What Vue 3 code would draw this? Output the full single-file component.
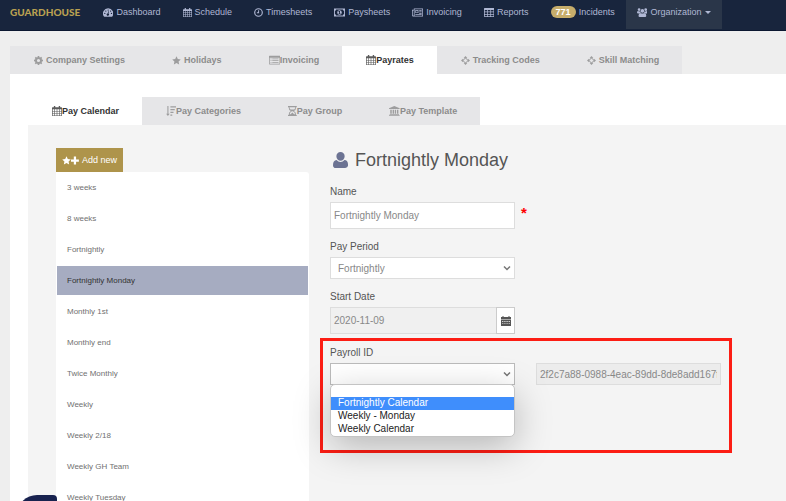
<template>
  <div class="page">
    <header class="navbar">
      <a href="#" class="brand">GUARDHOUSE</a>
      <nav class="nav">
        <a
          v-for="item in navItems"
          :key="item.label"
          href="#"
          :class="['nav-item', { open: item.menu }]"
        >
          <span v-if="item.badge" class="badge">{{ item.badge }}</span>
          <svg v-else class="icon" :viewBox="icons[item.icon].box" aria-hidden="true">
            <path :d="icons[item.icon].d" />
          </svg>
          <span>{{ item.label }}</span>
          <span v-if="item.menu" class="caret"></span>
        </a>
      </nav>
    </header>

    <main class="content">
      <nav class="tabs">
        <a
          v-for="tab in tabs"
          :key="tab.label"
          href="#"
          :class="['tab', { active: tab.label === activeTab, spaced: tab.spaced }]"
          @click.prevent="activeTab = tab.label"
        >
          <svg class="icon" :viewBox="icons[tab.icon].box" aria-hidden="true">
            <path :d="icons[tab.icon].d" />
          </svg>
          <span>{{ tab.label }}</span>
        </a>
      </nav>

      <div class="card">
        <nav class="tabs">
          <a
            v-for="tab in subTabs"
            :key="tab.label"
            href="#"
            :class="['tab', { active: tab.label === activeSubTab }]"
            @click.prevent="activeSubTab = tab.label"
          >
            <svg class="icon" :viewBox="icons[tab.icon].box" aria-hidden="true">
              <path :d="icons[tab.icon].d" />
            </svg>
            <span>{{ tab.label }}</span>
          </a>
        </nav>

        <div class="panel">
          <aside class="sidebar">
            <button type="button" class="btn-add">
              <svg class="icon" :viewBox="icons.star.box" aria-hidden="true">
                <path :d="icons.star.d" />
              </svg>
              <svg class="icon" :viewBox="icons.plus.box" aria-hidden="true">
                <path :d="icons.plus.d" />
              </svg>
              <span>Add new</span>
            </button>
            <ul class="calendar-list">
              <li v-for="name in calendars" :key="name">
                <a
                  href="#"
                  :class="{ selected: name === form.name }"
                  @click.prevent="form.name = name"
                >{{ name }}</a>
              </li>
            </ul>
          </aside>

          <form class="form" @submit.prevent>
            <h1>
              <svg :viewBox="icons.user.box" aria-hidden="true">
                <path :d="icons.user.d" />
              </svg>
              <span>{{ form.name }}</span>
            </h1>

            <div class="field">
              <label for="name">Name</label>
              <div class="row">
                <input id="name" v-model="form.name" type="text" class="control tall" />
                <span class="required">*</span>
              </div>
            </div>

            <div class="field">
              <label for="period">Pay Period</label>
              <div class="row">
                <div class="select-wrap">
                  <select id="period" v-model="form.period" class="control">
                    <option>Weekly</option>
                    <option>Fortnightly</option>
                    <option>Monthly</option>
                  </select>
                  <svg class="chevron" viewBox="0 0 8 6" aria-hidden="true">
                    <path d="M1 1.5L4 4.5L7 1.5" />
                  </svg>
                </div>
              </div>
            </div>

            <div class="field">
              <label for="start">Start Date</label>
              <div class="row">
                <div class="date-group">
                  <input id="start" v-model="form.start" type="text" class="control tall" readonly />
                  <button type="button" class="btn-date" aria-label="Choose date">
                    <svg :viewBox="icons.date.box" aria-hidden="true">
                      <path :d="icons.date.d" />
                    </svg>
                  </button>
                </div>
              </div>
            </div>

            <div class="field highlight">
              <label for="payroll">Payroll ID</label>
              <div class="row">
                <div class="select-wrap">
                  <select id="payroll" v-model="form.payroll" class="control payroll">
                    <option v-for="option in payrollOptions" :key="option">{{ option }}</option>
                  </select>
                  <svg class="chevron" viewBox="0 0 8 6" aria-hidden="true">
                    <path d="M1 1.5L4 4.5L7 1.5" />
                  </svg>
                  <ul class="dropdown" role="listbox" aria-label="Payroll ID">
                    <li
                      v-for="option in payrollOptions"
                      :key="option"
                      role="option"
                      :aria-selected="option === hovered"
                      :class="{ hovered: option === hovered }"
                      @mouseenter="hovered = option"
                      @click="form.payroll = option"
                    >{{ option }}</li>
                  </ul>
                </div>
                <input
                  type="text"
                  class="control payroll-key"
                  aria-label="Payroll key"
                  value="2f2c7a88-0988-4eac-89dd-8de8add167f6"
                  readonly
                />
              </div>
            </div>
          </form>
        </div>
      </div>
    </main>

    <button type="button" class="chat" aria-label="Help"></button>
  </div>
</template>

<script setup>
import { reactive, ref } from 'vue'

// repeats one rectangle over a set of columns and rows
function cells(xs, ys, w, h) {
  return ys.map(y => xs.map(x => `M${x} ${y}v${h}h${w}v${-h}z`).join('')).join('')
}

function dot(x, y, r) {
  return `M${x - r} ${y}a${r} ${r} 0 1 0 ${2 * r} 0a${r} ${r} 0 1 0 ${-2 * r} 0z`
}

const icons = {
  dashboard: {
    box: '0 0 16 14',
    d: 'M8 .5A8 8 0 0 0 1.2 12.8q.3.7.9.7h11.8q.6 0 .9-.7A8 8 0 0 0 8 .5z' +
      dot(2.8, 8.5, 1) + dot(4.4, 4.8, 1) + dot(8, 3.2, 1) + dot(11.8, 4.8, 1) + dot(13.2, 8.5, 1) +
      'M9.2 5.2L8.5 8.7a1.8 1.8 0 1 1-1.2-.3L8.2 5z'
  },
  calendar: {
    box: '0 0 16 16',
    d: 'M3 0h2.2v2h5.6V0H13v2h2q1 0 1 1v12q0 1-1 1H1q-1 0-1-1V3q0-1 1-1h2z' +
      cells([1.1, 4.8, 8.5, 12.2], [5.2, 8.8, 12.4], 2.7, 2.6)
  },
  clock: {
    box: '0 0 14 14',
    d: dot(7, 7, 6.8) + dot(7, 7, 5) + 'M6.4 3.5h1.5v4.5H4.5V6.6h1.9z'
  },
  money: {
    box: '0 0 18 13',
    d: 'M0 0h18v13H0zM3.5 1.5A2 2 0 0 1 1.5 3.5v6A2 2 0 0 1 3.5 11.5h11A2 2 0 0 1 16.5 9.5v-6A2 2 0 0 1 14.5 1.5z' +
      dot(9, 6.5, 3.8) + 'M8.4 4h1.4v4h1v1H7.4V8h1V5.5h-1v-.9z'
  },
  newspaper: {
    box: '0 0 18 13',
    d: 'M3 0h15v13H2q-2 0-2-2V2h3zM1.2 3.2v8q.9 1.2 1.8 0v-8zM4.2 1.2v10.6h12.6V1.2z' +
      'M5.5 2.5h5v5h-5zM6.7 3.7v2.6h2.6V3.7zM11.8 2.5h4v1.2h-4zM11.8 4.9h4v1.2h-4zM11.8 7.3h4v1.2h-4zM5.5 9.5h10.3v1.2H5.5z'
  },
  table: {
    box: '0 0 16 14',
    d: 'M1 0h14q1 0 1 1v12q0 1-1 1H1q-1 0-1-1V1q0-1 1-1z' +
      cells([1.2, 6.1, 11], [3.2, 6.8, 10.4], 3.8, 2.4)
  },
  users: {
    box: '0 0 18 15',
    d: dot(3.5, 2.6, 2.3) + dot(14.5, 2.6, 2.3) + dot(9, 4.8, 3) +
      'M1.5 5.2q2.2 1.2 4 .3q0 2 1 3.2Q4.5 8 3.4 9.2H2Q0 9.2 0 8q0-2.5 1.5-2.8z' +
      'M16.5 5.2q-2.2 1.2-4 .3q0 2-1 3.2q2-.7 3.1.5H16q2 0 2-1.2q0-2.5-1.5-2.8z' +
      'M6.2 8.2q2.8 1.8 5.6 0q3.7.3 3.7 4.8Q15.5 15 13.5 15h-9q-2 0-2-2q0-4.5 3.7-4.8z'
  },
  gear: {
    box: '0 0 16 16',
    d: 'M6.7 0h2.6l.4 2 1.3.6 1.7-1.1 1.9 1.9-1.1 1.7.6 1.3 1.9.3v2.6l-1.9.4-.6 1.3 1.1 1.7-1.9 1.9-1.7-1.1-1.3.6-.4 1.9H6.7l-.4-1.9-1.3-.6-1.7 1.1-1.9-1.9L2.5 11l-.6-1.3L0 9.3V6.7l1.9-.3.6-1.3-1.1-1.7 1.9-1.9L5 2.6 6.3 2z' +
      dot(8, 8, 2.8)
  },
  star: {
    box: '0 0 16 16',
    d: 'M8 .5l2.3 4.9 5.3.7-3.9 3.7 1 5.3L8 12.5l-4.7 2.6 1-5.3L.4 6.1l5.3-.7z'
  },
  plus: {
    box: '0 0 14 16',
    d: 'M5 1h4v5h5v4H9v5H5v-5H0V6h5z'
  },
  list: {
    box: '0 0 18 16',
    d: 'M1 1h16q1 0 1 1v12q0 1-1 1H1q-1 0-1-1V2q0-1 1-1zM1.2 4.2v9.6h15.6V4.2z' +
      cells([2.5], [5.5, 8.3, 11.1], 1.5, 1.4) + cells([5.2], [5.5, 8.3, 11.1], 10, 1.4)
  },
  crosshair: {
    box: '0 0 16 16',
    d: 'M8 0l3.2 3.6H9.3l3.1 3.1V4.8L16 8l-3.6 3.2V9.3l-3.1 3.1h1.9L8 16l-3.2-3.6h1.9L3.6 9.3v1.9L0 8l3.6-3.2v1.9l3.1-3.1H4.8z' +
      'M8 4.3L4.3 8L8 11.7L11.7 8z'
  },
  sort: {
    box: '0 0 16 16',
    d: 'M2.2 0h1.7v12.5h2L3 16 .2 12.5h2zM7 .5h9v1.9H7zM7 4.9h7v1.9H7zM7 9.3h5v1.9H7zM7 13.7h3v1.9H7z'
  },
  hourglass: {
    box: '0 0 14 16',
    d: 'M0 0h14v1.8h-1q0 4.2-3.6 6.2Q13 10 13 14.2h1V16H0v-1.8h1Q1 10 4.6 8Q1 6 1 1.8H0zM2.3 1.8Q2.5 4 4 5.5h6q1.5-1.5 1.7-3.7zM6.3 8.5Q3.5 9.8 2.5 13h1.8L7 10.5 9.7 13h1.8Q10.5 9.8 7.7 8.5z'
  },
  bank: {
    box: '0 0 17 16',
    d: 'M8.5 0L17 3.5v1.3H0V3.5zM2 5.8h2.4v6.5H2zM5.8 5.8h2.2v6.5H5.8zM9.2 5.8h2.2v6.5H9.2zM12.8 5.8H15v6.5h-2.2zM1 12.8h15v1.1H1zM0 14.6h17V16H0z'
  },
  user: {
    box: '0 0 16 17',
    d: 'M8 0a4.4 4.4 0 0 1 4.4 4.5A4.4 4.8 0 0 1 8 9.3a4.4 4.8 0 0 1-4.4-4.8A4.4 4.4 0 0 1 8 0zM3.8 8.5Q5.5 10.5 8 10.5t4.2-2Q16 8.7 16 14q0 3-3 3H3q-3 0-3-3 0-5.3 3.8-5.5z'
  },
  date: {
    box: '0 0 10 10',
    d: 'M0 1h1.5V0h1v1h5V0h1v1H10v2H0zM0 3.5h10V10H0z' + cells([1, 3.2, 5.4, 7.6], [5.2, 7.4], 1.4, 0.7)
  }
}

const navItems = [
  { label: 'Dashboard', icon: 'dashboard' },
  { label: 'Schedule', icon: 'calendar' },
  { label: 'Timesheets', icon: 'clock' },
  { label: 'Paysheets', icon: 'money' },
  { label: 'Invoicing', icon: 'newspaper' },
  { label: 'Reports', icon: 'table' },
  { label: 'Incidents', badge: 771 },
  { label: 'Organization', icon: 'users', menu: true }
]

const tabs = [
  { label: 'Company Settings', icon: 'gear', spaced: true },
  { label: 'Holidays', icon: 'star', spaced: true },
  { label: 'Invoicing', icon: 'list' },
  { label: 'Payrates', icon: 'calendar' },
  { label: 'Tracking Codes', icon: 'crosshair', spaced: true },
  { label: 'Skill Matching', icon: 'crosshair', spaced: true }
]

const subTabs = [
  { label: 'Pay Calendar', icon: 'calendar' },
  { label: 'Pay Categories', icon: 'sort' },
  { label: 'Pay Group', icon: 'hourglass' },
  { label: 'Pay Template', icon: 'bank' }
]

const calendars = [
  '3 weeks',
  '8 weeks',
  'Fortnightly',
  'Fortnightly Monday',
  'Monthly 1st',
  'Monthly end',
  'Twice Monthly',
  'Weekly',
  'Weekly 2/18',
  'Weekly GH Team',
  'Weekly Tuesday'
]

const payrollOptions = ['', 'Fortnightly Calendar', 'Weekly - Monday', 'Weekly Calendar']

const activeTab = ref('Payrates')
const activeSubTab = ref('Pay Calendar')
const hovered = ref('Fortnightly Calendar')

const form = reactive({
  name: 'Fortnightly Monday',
  period: 'Fortnightly',
  start: '2020-11-09',
  payroll: ''
})
</script>

<style>
body {
  margin: 0;
  background: #eee;
}
</style>

<style scoped>
.page {
  position: relative;
  height: 100vh;
  overflow: hidden;
  display: flex;
  flex-direction: column;
  background: #eee;
  color: #555;
  font-family: "Liberation Sans", Arial, sans-serif;
  font-size: 10px;
}

.page * {
  box-sizing: border-box;
}

a {
  color: inherit;
  text-decoration: none;
}

button,
input,
select {
  font: inherit;
  color: inherit;
}

svg {
  display: block;
  flex: none;
  fill: currentColor;
  fill-rule: evenodd;
}

.icon {
  height: 9px;
}

.navbar {
  display: flex;
  flex: none;
  height: 31px;
  background: #18253d;
  border-bottom: 1px solid #0b1730;
  color: #b0b8d4;
  font-size: 9px;
}

.brand {
  padding: 0 12px 0 10px;
  line-height: 25px;
  color: #b9a051;
  font-family: Lato, sans-serif;
  font-size: 10px;
  font-weight: 900;
}

.nav {
  display: flex;
}

.nav-item {
  display: flex;
  align-items: center;
  gap: 3px;
  height: 29px;
  padding: 0 11px 5px;
  white-space: nowrap;
}

.nav-item .icon {
  max-width: 11px;
}

.nav-item.open {
  background: #2a3649;
}

.badge {
  padding: 0 5px;
  border-radius: 6px;
  background: #c6ad6b;
  color: #fff;
  font-weight: bold;
  line-height: 12px;
}

.caret {
  margin-left: 1px;
  border: 3px solid transparent;
  border-top-color: currentColor;
  border-bottom: 0;
}

.content {
  display: flex;
  flex: 1;
  flex-direction: column;
  padding: 15px 0 0 10px;
}

.tabs {
  display: flex;
  align-self: flex-start;
  background: #e6e6e8;
  color: #8c8c8c;
  font-size: 9px;
  font-weight: bold;
}

.tab {
  display: flex;
  align-items: center;
  height: 28px;
  padding: 0 23px 0 24px;
  white-space: nowrap;
}

.tab .icon {
  height: 10px;
  opacity: 0.8;
}

.tab.spaced .icon {
  height: 9px;
  margin-right: 3px;
}

.tab.active {
  background: #fff;
  color: #333;
}

.card {
  display: flex;
  flex: 1;
  flex-direction: column;
  padding: 23px 0 0 18px;
  background: #fff;
}

.panel {
  display: grid;
  flex: 1;
  grid-template-columns: 253fr 391fr;
  gap: 21px;
  padding: 23px 65px 0 28px;
  background: #f4f4f4;
}

.btn-add {
  display: flex;
  align-items: center;
  height: 24px;
  padding: 0 6px;
  border: 0;
  background: #ae944b;
  color: #fff;
  font-size: 9px;
}

.btn-add span {
  margin-left: 3px;
}

.calendar-list {
  margin: 0;
  padding: 0;
  list-style: none;
  border-radius: 0 3px 0 0;
  background: #fff;
  color: #707070;
  font-size: 8px;
}

.calendar-list a {
  display: block;
  padding: 0 10px;
  border: 1px solid transparent;
  line-height: 29px;
}

.calendar-list a.selected {
  border-color: #fff;
  background: #a6acc1;
  color: #333;
}

h1 {
  display: flex;
  align-items: center;
  gap: 7px;
  margin: 0 0 14px;
  padding-left: 3px;
  color: #555;
  font-size: 18px;
  font-weight: normal;
  line-height: 24px;
}

h1 svg {
  height: 16px;
  color: #6c7393;
}

.field {
  margin-bottom: 12px;
}

.field label {
  display: block;
  margin-bottom: 4px;
  line-height: 12px;
}

.row {
  display: grid;
  grid-template-columns: minmax(0, 1fr) minmax(0, 1fr);
  gap: 21px;
}

.control {
  display: block;
  width: 100%;
  height: 22px;
  padding: 0 3px;
  border: 1px solid #ddd;
  border-radius: 0;
  outline: 0;
  background: #fff;
  color: #888;
}

.control.tall {
  height: 27px;
}

.control[readonly] {
  background: #f0f0f0;
}

.required {
  margin-left: -15px;
  color: #f00;
  font-size: 15px;
  font-weight: bold;
  line-height: 22px;
}

.select-wrap {
  position: relative;
}

select.control {
  appearance: none;
  padding: 0 20px 0 7px;
}

.chevron {
  position: absolute;
  top: 8px;
  right: 4px;
  width: 8px;
  height: 6px;
  fill: none;
  stroke: #777;
  stroke-width: 1.5;
  pointer-events: none;
}

.date-group {
  display: flex;
}

.btn-date {
  display: grid;
  flex: 0 0 19px;
  place-items: center;
  margin-left: -1px;
  padding: 0;
  border: 1px solid #ccc;
  background: #fff;
  color: #555;
}

.btn-date svg {
  width: 10px;
  height: 10px;
}

.highlight {
  margin: -8px -11px 0 -10px;
  padding: 6px 8px 65px 7px;
  border: 3px solid #fc1d14;
}

.control.payroll {
  border-color: #bbb;
}

.control.payroll-key {
  background: #ececec;
}

.dropdown {
  position: absolute;
  top: 21px;
  left: 0;
  right: 0;
  margin: 0;
  padding: 0;
  overflow: hidden;
  list-style: none;
  border: 1px solid #c4c4c4;
  border-radius: 5px;
  background: #fff;
  box-shadow: 0 10px 36px rgba(0, 0, 0, 0.25);
  color: #222;
}

.dropdown li {
  height: 12px;
  padding: 0 7px;
  line-height: 12px;
}

.dropdown li + li {
  height: 13px;
}

.dropdown li.hovered {
  background: #3f8efc;
  color: #fff;
}

.chat {
  position: absolute;
  bottom: -34px;
  left: 17px;
  width: 40px;
  height: 40px;
  border: 0;
  border-radius: 20px 4px 20px 20px;
  background: #18224f;
}
</style>
